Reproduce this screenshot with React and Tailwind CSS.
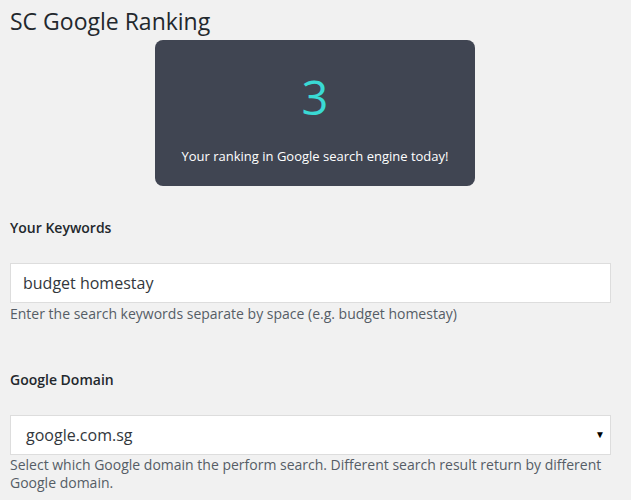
import React, { useState } from 'react';

const App = () => {
    const [keywords, setKeywords] = useState('budget homestay');

    return (
        <div className="min-h-[500px] bg-[#f1f1f1] px-[10px] text-[#23282d]" style={{ fontFamily: '"Open Sans", sans-serif' }}>
            <h1 className="pt-[6px] text-[23px] leading-[31px] font-normal">SC Google Ranking</h1>

            {/* Ranking card */}
            <div className="ml-[145px] mt-[3px] flex h-[146px] w-[320px] flex-col items-center rounded-[8px] bg-[#404552]">
                <div className="mt-[29px] text-[47px] leading-[56px] text-[#3ad9d4]">3</div>
                <div className="mt-[22px] text-[13px] leading-[18px] text-white">Your ranking in Google search engine today!</div>
            </div>

            {/* Keywords */}
            <div className="mt-[32px] text-[14px] font-semibold leading-[20px]">Your Keywords</div>
            <input
                type="text"
                value={keywords}
                onChange={e => setKeywords(e.target.value)}
                className="mt-[25px] block h-[40px] w-[601px] border border-[#ddd] bg-white px-[12px] text-[16px] text-[#32373c] outline-none"
            />
            <p className="mt-[1px] text-[14px] leading-[20px] text-[#555d66]">Enter the search keywords separate by space (e.g. budget homestay)</p>

            {/* Domain */}
            <div className="mt-[46px] text-[14px] font-semibold leading-[20px]">Google Domain</div>
            <div className="relative mt-[25px] flex h-[40px] w-[601px] items-center border border-[#ddd] bg-white pl-[15px] text-[16px] text-[#32373c]">
                google.com.sg
                <span className="absolute right-[5px] top-[11px] text-[10px] text-black">▼</span>
            </div>
            <p className="mt-[1px] w-[610px] text-[14px] leading-[18px] text-[#555d66]">
                Select which Google domain the perform search. Different search result return by different Google domain.
            </p>
        </div>
    );
};

export default App;
